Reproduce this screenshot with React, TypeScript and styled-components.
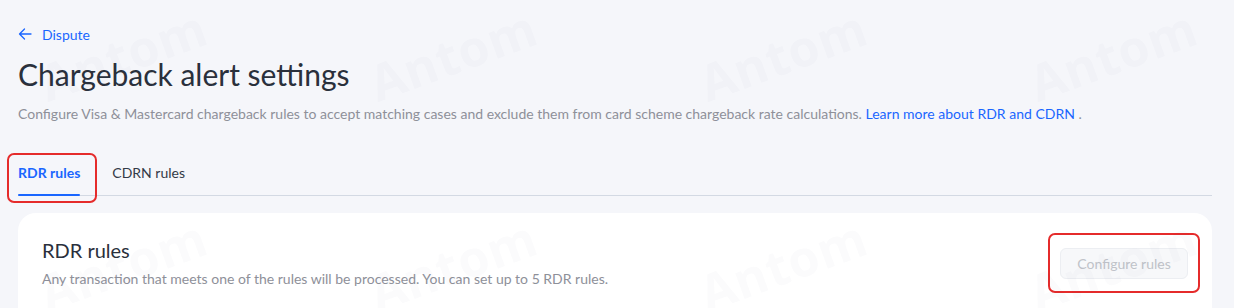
import React from "react";
import styled, { createGlobalStyle } from "styled-components";

const Global = createGlobalStyle`
  html, body { margin: 0; padding: 0; background: #f5f6fa; }
  body { font-family: Lato, "Open Sans", sans-serif; -webkit-font-smoothing: antialiased; }
  * { box-sizing: border-box; }
`;

const Page = styled.div`
  position: relative;
  width: 1234px;
  height: 308px;
  overflow: hidden;
  padding: 24px 22px 0 18px;
  background: #f5f6fa;
`;

const BackLink = styled.a`
  display: flex;
  align-items: center;
  gap: 10px;
  height: 20px;
  color: #1a66ff;
  font-size: 14px;
  text-decoration: none;
`;

const Title = styled.h1`
  margin: 12px 0 0;
  font-size: 30px;
  line-height: 36px;
  font-weight: 400;
  color: #2a303c;
`;

const Desc = styled.p`
  margin: 12px 0 0;
  font-size: 14px;
  line-height: 20px;
  color: #8e9099;
`;

const Link = styled.a`
  color: #1a66ff;
  text-decoration: none;
`;

const Tabs = styled.div`
  display: flex;
  gap: 32px;
  margin-top: 39px;
  border-bottom: 1px solid #d3d9e3;
`;

const Tab = styled.div<{ $active?: boolean; $marked?: boolean }>`
  position: relative;
  padding: 0 0 12px;
  font-size: 14px;
  line-height: 20px;
  font-weight: ${(p) => (p.$active ? 700 : 400)};
  color: ${(p) => (p.$active ? "#1a66ff" : "#333a47")};
  ${(p) =>
    p.$active &&
    `&::before { content: ""; position: absolute; left: 0; right: 0; bottom: -1px; height: 2px; background: #1a66ff; border-radius: 1px; }`}
  ${(p) =>
    p.$marked &&
    `&::after { content: ""; position: absolute; left: -11px; right: -17px; top: -10px; bottom: -8px; border: 2px solid #e52b2b; border-radius: 7px; }`}
`;

const Card = styled.div`
  margin-top: 17px;
  background: #ffffff;
  border-radius: 18px;
  padding: 24px 24px 0 24px;
`;

const CardHead = styled.div`
  display: flex;
  justify-content: space-between;
  align-items: flex-start;
`;

const CardTitle = styled.h2`
  margin: 0;
  font-size: 20px;
  line-height: 26px;
  font-weight: 400;
  color: #2a303c;
`;

const CardDesc = styled.p`
  margin: 6px 0 0;
  font-size: 14px;
  line-height: 20px;
  color: #8e9099;
`;

const Marked = styled.div`
  position: relative;
  margin-top: 11px;
  &::after {
    content: "";
    position: absolute;
    left: -12px;
    right: -12px;
    top: -15px;
    bottom: -14px;
    border: 2px solid #e52b2b;
    border-radius: 7px;
  }
`;

const Button = styled.button`
  display: block;
  width: 128px;
  height: 31px;
  border: 1px solid #eceef2;
  background: #f7f8fa;
  border-radius: 6px;
  color: #c0c3c9;
  font-family: Lato, sans-serif;
  font-size: 14px;
  cursor: not-allowed;
`;

const TableTop = styled.div`
  margin-top: 22px;
  height: 20px;
  background: #f5f6fa;
  border-radius: 4px 4px 0 0;
`;

const WatermarkLayer = styled.svg`
  position: absolute;
  inset: 0;
  pointer-events: none;
`;

const marks = [
  [125, 60], [455, 60], [785, 60], [1115, 60],
  [125, 270], [455, 270], [785, 270], [1115, 270],
];

export default function App() {
  return (
    <>
      <Global />
      <Page>
        <BackLink href="#">
          <svg width="14" height="14" viewBox="0 0 14 14" fill="none">
            <path d="M13 7H1.5M6.5 2L1.5 7l5 5" stroke="#1a66ff" strokeWidth="1.3" strokeLinecap="round" strokeLinejoin="round" />
          </svg>
          Dispute
        </BackLink>
        <Title>Chargeback alert settings</Title>
        <Desc>
          Configure Visa &amp; Mastercard chargeback rules to accept matching cases and exclude them from card scheme chargeback rate calculations.{" "}
          <Link href="#">Learn more about RDR and CDRN</Link> .
        </Desc>
        <Tabs>
          <Tab $active $marked>RDR rules</Tab>
          <Tab>CDRN rules</Tab>
        </Tabs>
        <Card>
          <CardHead>
            <div>
              <CardTitle>RDR rules</CardTitle>
              <CardDesc>Any transaction that meets one of the rules will be processed. You can set up to 5 RDR rules.</CardDesc>
            </div>
            <Marked>
              <Button disabled>Configure rules</Button>
            </Marked>
          </CardHead>
          <TableTop />
        </Card>
        <WatermarkLayer width="1234" height="308" aria-hidden="true">
          {marks.map(([x, y], i) => (
            <text
              key={i}
              x={x}
              y={y}
              textAnchor="middle"
              dominantBaseline="middle"
              transform={`rotate(-20 ${x} ${y})`}
              fontFamily="'Open Sans', sans-serif"
              fontWeight={700}
              fontSize={50}
              letterSpacing={1}
              fill="rgba(40,50,80,0.02)"
            >
              Antom
            </text>
          ))}
        </WatermarkLayer>
      </Page>
    </>
  );
}
